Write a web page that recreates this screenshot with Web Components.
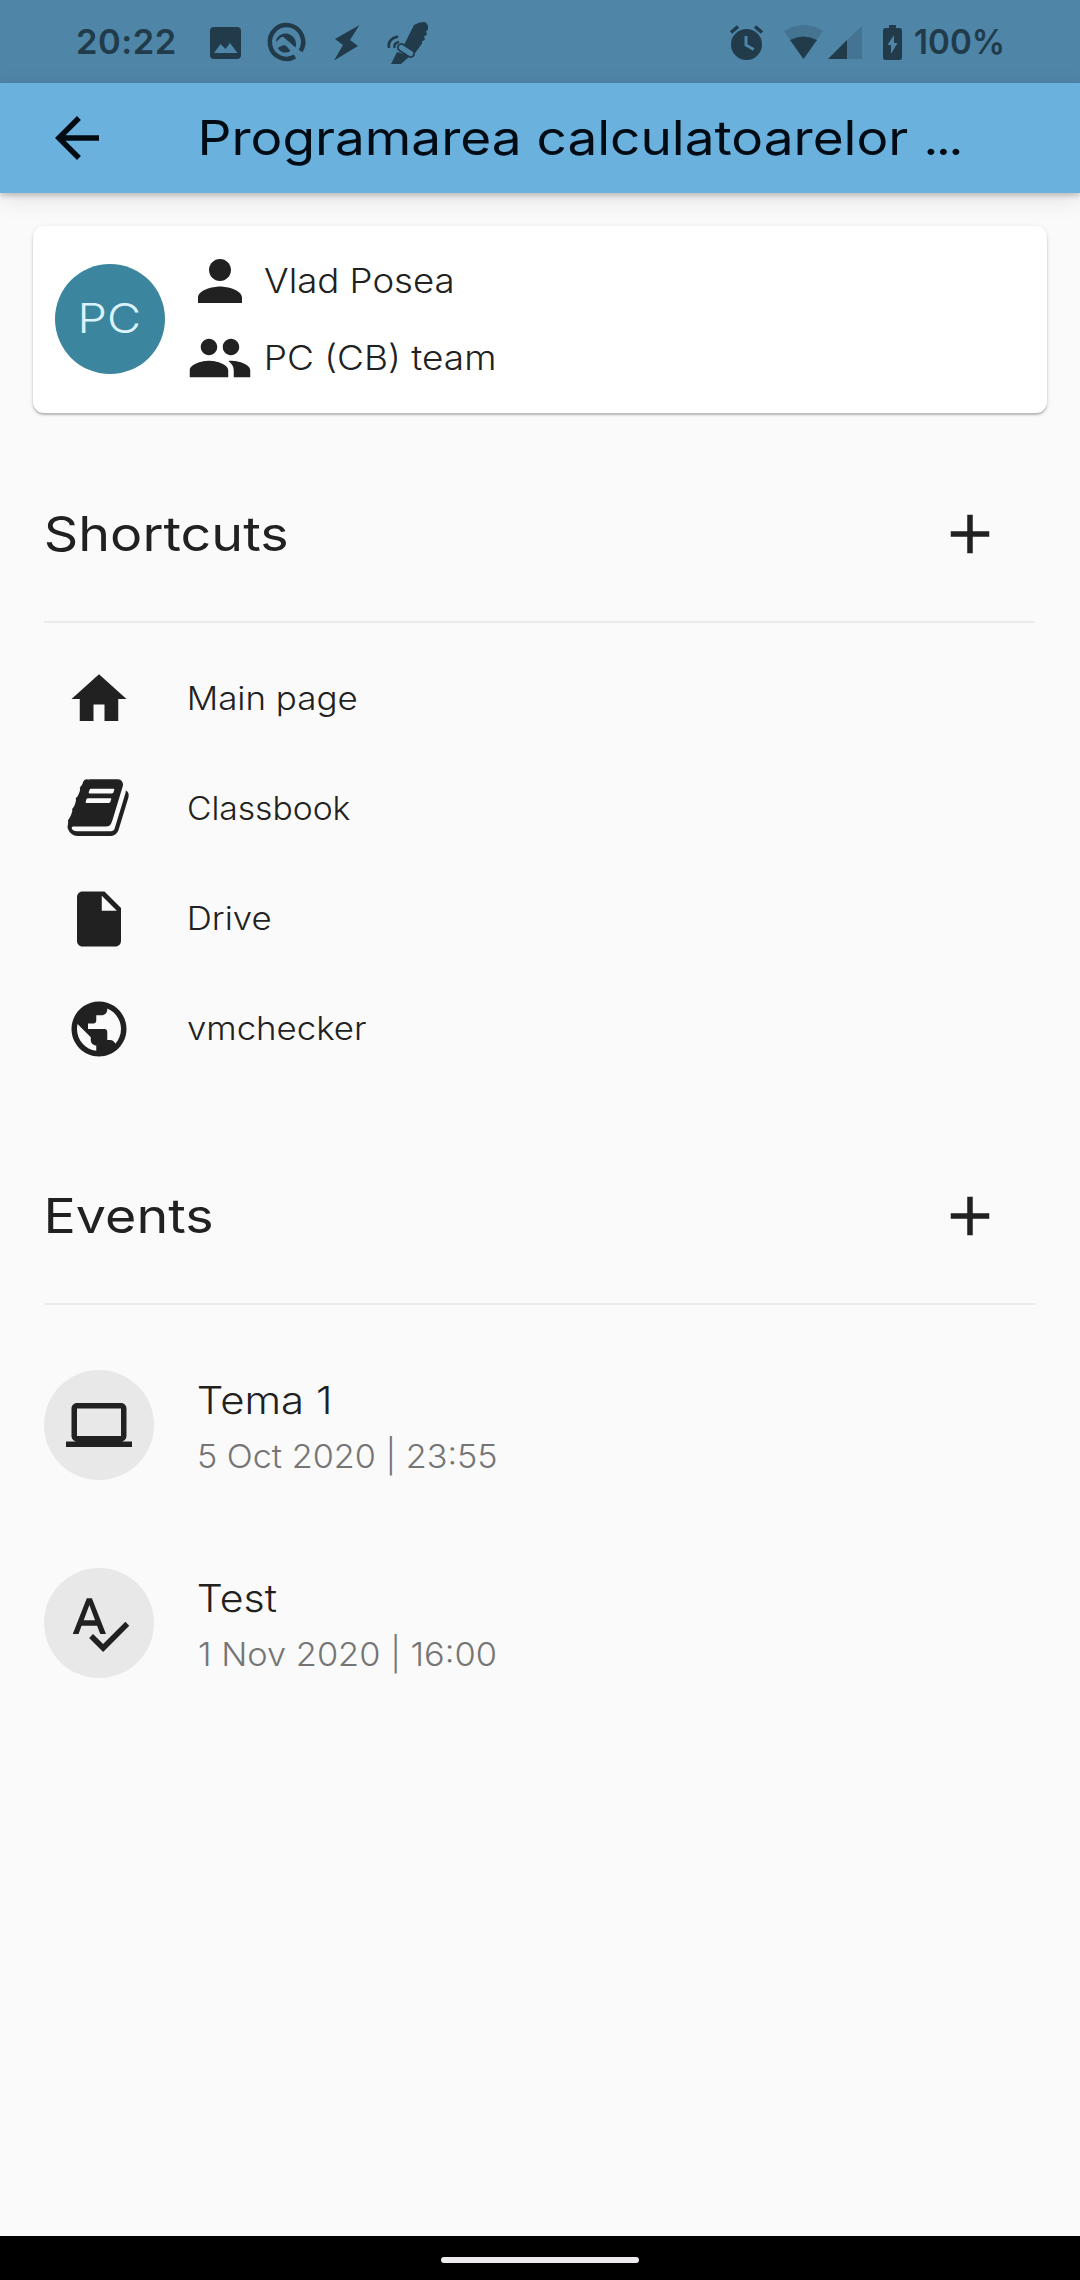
<!DOCTYPE html>
<html lang="en">
<head>
<meta charset="utf-8">
<title>Class details</title>
<style>
html,body{margin:0;padding:0;background:#fafafa}
body{font-family:Inter,"Open Sans",sans-serif;color:#212121;width:1080px;height:2280px;overflow:hidden}
</style>
</head>
<body>
<class-page></class-page>
<script>
const define = (name, html, setup) => customElements.define(name, class extends HTMLElement {
  connectedCallback() {
    if (this.shadowRoot) return;
    const root = this.attachShadow({ mode: "open" });
    root.innerHTML = html;
    if (setup) setup(this, root);
  }
});

/* Single line label whose ink spans exactly the width given by w. */
define("fit-label", `<style>
:host{display:block;white-space:nowrap;line-height:1.2;flex:none}
span{display:inline-block;transform-origin:0 50%}
</style><span><slot></slot></span>`, (el, root) => {
  const size = +el.getAttribute("size"), weight = el.getAttribute("weight") || "300", w = +el.getAttribute("w");
  const spacing = +(el.getAttribute("spacing") || 0);
  el.style.cssText += `;width:${w}px;font-size:${size}px;font-weight:${weight};letter-spacing:${spacing}px`;
  const ctx = document.createElement("canvas").getContext("2d");
  ctx.font = `${weight} ${size}px Inter, "Open Sans", sans-serif`;
  ctx.letterSpacing = spacing + "px";
  const m = ctx.measureText(el.textContent);
  const k = w / (m.actualBoundingBoxLeft + m.actualBoundingBoxRight);
  root.querySelector("span").style.transform = `translateX(${m.actualBoundingBoxLeft * k}px) scaleX(${k})`;
});

const icons = {
  back: "M20 11H7.83l5.59-5.59L12 4l-8 8 8 8 1.41-1.41L7.83 13H20v-2z",
  plus: "M19 13h-6v6h-2v-6H5v-2h6V5h2v6h6v2z",
  person: "M12 12c2.21 0 4-1.79 4-4s-1.79-4-4-4-4 1.79-4 4 1.79 4 4 4zm0 2c-2.67 0-8 1.34-8 4v2h16v-2c0-2.66-5.33-4-8-4z",
  people: "M16 11c1.66 0 2.99-1.34 2.99-3S17.66 5 16 5c-1.66 0-3 1.34-3 3s1.34 3 3 3zm-8 0c1.66 0 2.99-1.34 2.99-3S9.66 5 8 5C6.34 5 5 6.34 5 8s1.34 3 3 3zm0 2c-2.33 0-7 1.17-7 3.5V19h14v-2.5c0-2.33-4.67-3.5-7-3.5zm8 0c-.29 0-.62.02-.97.05 1.16.84 1.97 1.97 1.97 3.45V19h6v-2.5c0-2.33-4.67-3.5-7-3.5z",
  home: "M10 20v-6h4v6h5v-8h3L12 3 2 12h3v8z",
  file: "M6 2c-1.1 0-1.99.9-1.99 2L4 20c0 1.1.89 2 1.99 2H18c1.1 0 2-.9 2-2V8l-6-6H6zm7 7V3.5L18.5 9H13z",
  globe: "M12 2C6.48 2 2 6.48 2 12s4.48 10 10 10 10-4.48 10-10S17.52 2 12 2zm-1 17.93c-3.95-.49-7-3.85-7-7.93 0-.62.08-1.21.21-1.79L9 15v1c0 1.1.9 2 2 2v1.93zm6.9-2.54c-.26-.81-1-1.39-1.9-1.39h-1v-3c0-.55-.45-1-1-1H8v-2h2c.55 0 1-.45 1-1V7h2c1.1 0 2-.9 2-2v-.41c2.93 1.19 5 4.06 5 7.41 0 2.08-.8 3.97-2.1 5.39z",
  laptop: "M20 18c1.1 0 1.99-.9 1.99-2L22 6c0-1.1-.9-2-2-2H4c-1.1 0-2 .9-2 2v10c0 1.1.9 2 2 2H0v2h24v-2h-4zM4 6h16v10H4V6z",
  spell: "M12.45 16h2.09L9.43 3H7.57L2.46 16h2.09l1.12-3h5.64l1.14 3zm-6.02-5L8.5 5.48 10.57 11H6.43zm15.16.59l-8.09 8.09L9.83 16l-1.41 1.41 5.09 5.09L23 13l-1.41-1.41z",
  book: "M1639 478q40 57 18 129l-275 906q-19 64-76.5 107.5t-122.5 43.5h-923q-77 0-148.5-53.5t-99.5-131.5q-24-67-2-127 0-4 3-27t4-37q1-8-3-21.5t-3-19.5q2-11 8-21t16.5-23.5 16.5-23.5q23-38 45-91.5t30-91.5q3-10 .5-30t-.5-28q3-11 17-28t17-23q21-36 42-92t25-90q1-9-2.500-32t.5-28q4-13 22-30.5t22-22.5q19-26 42.500-84.500t27.500-96.500q1-8-3-25.500t-2-26.500q2-8 9-18t18-23 17-21q8-12 16.500-30.500t15-35 16-36 19.500-32 26.500-23.500 36-11.500 47.500 5.500l-1 3q38-9 51-9h761q74 0 114 56t18 130l-274 906q-36 119-71.500 153.500t-128.500 34.500h-869q-27 0-38 15-11 16-1 43 24 70 144 70h923q29 0 56-15.500t35-41.500l300-987q7-22 5-57 38 15 59 43zm-1064 2q-4 13 2 22.500t20 9.500h608q13 0 25.500-9.500t16.500-22.500l21-64q4-13-2-22.500t-20-9.500h-608q-13 0-25.500 9.500t-16.500 22.500zm-83 256q-4 13 2 22.500t20 9.500h608q13 0 25.500-9.500t16.500-22.500l21-64q4-13-2-22.500t-20-9.500h-608q-13 0-25.500 9.500t-16.500 22.500z"
};
define("app-icon", "", (el, root) => {
  const n = el.getAttribute("name");
  root.innerHTML = `<style>:host{display:block;width:66px;height:66px;flex:none}svg{display:block;width:100%;height:100%;fill:currentColor}</style>
<svg viewBox="${n === "book" ? "-42 38 1792 1792" : "0 0 24 24"}"><path d="${icons[n]}"/></svg>`;
});

define("status-bar", `<style>
:host{display:flex;justify-content:space-between;align-items:center;box-sizing:border-box;height:83px;padding:2px 78px 0 78px;background:#4f85a7;color:#213b4b}
div{display:flex;align-items:center}
svg{display:block;fill:currentColor;overflow:visible;flex:none}
</style>
<div>
 <fit-label size="34" w="97" weight="600" spacing="0.5">20:22</fit-label>
 <svg style="margin-left:35px" width="31" height="32" viewBox="0 0 31 32"><path fill-rule="evenodd" d="M4 0h23q4 0 4 4v24q0 4-4 4H4q-4 0-4-4V4q0-4 4-4zM4 26h23.500l-7.500-10-4.500 6-5-5z"/></svg>
 <svg style="margin-left:26px" width="38" height="39" viewBox="0 0 38 39"><path d="M28 33.500A16.700 16.900 0 1 1 33.600 28" fill="none" stroke="currentColor" stroke-width="4.500"/><path d="M10 15a10.500 10.500 0 0 1 18.500 9.500L17 14.500q-1.500-1.500-3-.2L9 19q0-2 1-4zM10.500 25l5-2.500q2-1 4 .7l4 4.800q-3 2-7 1.500-4-1-6-4.500z"/></svg>
 <svg style="margin-left:29px" width="26" height="36" viewBox="0 0 26 36"><path d="M25.500 0 1 14l8 6L0 35.500 24 21l-8-6z"/></svg>
 <svg style="margin-left:27px" width="42" height="42" viewBox="0 0 42 42"><path d="M15 27 27 3q7-4 12-2.500l2 3v4l-2 2 1 3-3 2 1 3-3 2v2l-9 12.500q-3-3-11-7zM10 30l13 4-9 8H4z"/><rect x="10" y="25" width="18" height="7" rx="3.500" transform="rotate(33 19 28.500)" fill="#4f85a7" stroke="currentColor" stroke-width="1.800"/><path d="M2 26q-2-9 9-11.500M7.500 26q-1-5 4.500-6" fill="none" stroke="currentColor" stroke-width="2.500"/></svg>
</div>
<div>
 <svg width="33" height="35" viewBox="0 0 33 35"><path fill-rule="evenodd" d="M16.500 4a15.500 15.500 0 1 0 0 31 15.500 15.500 0 0 0 0-31zM14.500 11h3v8.200l7 4.100-1.500 2.500-8.500-5z"/><path d="M1 7.500 8 1.500M32 7.500l-7-6" stroke="currentColor" stroke-width="3.500"/></svg>
 <svg style="margin-left:21px" width="39" height="34" viewBox="0 0 39 34"><path opacity=".22" d="M0 6q19.500-12 39 0L19.500 34z"/><path d="M6 15q13.500-7 27 0L19.500 34z"/></svg>
 <svg style="margin-left:5px" width="34" height="33" viewBox="0 0 34 33"><path opacity=".22" d="M34 0v33H19V14z"/><path d="M19 14v19H0z"/></svg>
 <svg style="margin-left:21px" width="19" height="35" viewBox="0 0 19 35"><path fill-rule="evenodd" d="M6 0h7v3h3.500Q19 3 19 5.500v27q0 2.500-2.500 2.500h-14Q0 35 0 32.500v-27Q0 3 2.500 3H6zM11 10 4.500 20H8v9l6.500-11H11z"/></svg>
 <fit-label style="margin-left:13px" size="34" w="87" weight="600">100%</fit-label>
</div>`);

define("app-bar", `<style>
:host{display:flex;align-items:center;box-sizing:border-box;height:109.500px;padding:0 44px;background:#6ab1dd;color:#000b14;box-shadow:0 3px 5px rgba(0,0,0,.18),0 6px 22px rgba(0,0,0,.1);position:relative;z-index:1}
</style><app-icon name="back"></app-icon><slot></slot>`);

define("info-card", `<style>
:host{display:flex;align-items:center;box-sizing:border-box;height:187.500px;margin:33px 33px;padding:0 22px;background:#fff;border-radius:11px;box-shadow:0 2px 2px rgba(0,0,0,.22),0 1px 5px rgba(0,0,0,.1)}
.avatar{width:110px;height:110px;border-radius:50%;background:#3b859e;color:#dcf2fc;display:flex;align-items:center;justify-content:center;flex:none}
.avatar fit-label{margin-top:-2px}
.rows{display:flex;flex-direction:column;gap:11px;margin-left:22px}
.rows div{display:flex;align-items:center;height:66px}
.rows fit-label{margin-top:1px}
</style>
<div class="avatar"><fit-label size="41" w="58">PC</fit-label></div>
<div class="rows">
<div><app-icon name="person"></app-icon><fit-label style="margin-left:11px" size="33.500" w="188">Vlad Posea</fit-label></div>
<div><app-icon name="people"></app-icon><fit-label style="margin-left:14px" size="33.500" w="227">PC (CB) team</fit-label></div>
</div>`);

define("section-header", `<style>
:host{display:flex;align-items:center;justify-content:space-between;box-sizing:border-box;height:177px;margin:0 45px 0 44px;padding:0 32px 0 1.500px;border-bottom:2px solid #ebebeb}
</style><slot></slot><app-icon name="plus"></app-icon>`);

define("shortcut-item", `<style>
:host{display:flex;align-items:center;height:110px;padding-left:66px}
app-icon{margin-top:-3px}
div{margin:-1px 0 0 var(--indent,58px)}
</style><div><slot></slot></div>`, (el, root) => {
  const icon = document.createElement("app-icon");
  icon.setAttribute("name", el.getAttribute("icon"));
  root.querySelector("div").before(icon);
});

define("event-item", `<style>
:host{display:flex;align-items:center;height:198px;padding-left:44px}
.disc{width:110px;height:110px;border-radius:50%;background:#e8e8e8;display:flex;align-items:center;justify-content:center;flex:none}
.text{display:flex;flex-direction:column;margin-left:45px;gap:14px;padding-top:4px}
::slotted([slot=date]){color:#757575}
</style><div class="disc"></div><div class="text"><slot></slot><slot name="date"></slot></div>`, (el, root) => {
  const i = document.createElement("app-icon");
  i.setAttribute("name", el.getAttribute("icon"));
  root.querySelector(".disc").append(i);
});

define("nav-bar", `<style>
:host{display:flex;align-items:center;justify-content:center;height:44px;background:#000;padding-top:4px;box-sizing:border-box}
i{width:198px;height:6px;border-radius:3px;background:#eeebee}
</style><i></i>`);

define("class-page", `<style>
:host{display:flex;flex-direction:column;width:1080px;height:2280px;background:#fafafa}
main{flex:1}
.shortcuts{padding:22px 0 43px}
.events{padding-top:21px}
.dots{letter-spacing:-2.500px}
</style>
<status-bar></status-bar>
<app-bar><fit-label style="margin-left:92px" size="48" w="764" weight="400">Programarea calculatoarelor <span class="dots">...</span></fit-label></app-bar>
<main>
<info-card></info-card>
<section-header><fit-label size="48" w="240" weight="400">Shortcuts</fit-label></section-header>
<div class="shortcuts">
<shortcut-item icon="home"><fit-label size="32" w="166">Main page</fit-label></shortcut-item>
<shortcut-item icon="book" style="--indent:56.500px"><fit-label size="32" w="161.500">Classbook</fit-label></shortcut-item>
<shortcut-item icon="file"><fit-label size="32" w="80">Drive</fit-label></shortcut-item>
<shortcut-item icon="globe" style="--indent:55.500px"><fit-label size="32" w="178">vmchecker</fit-label></shortcut-item>
</div>
<section-header><fit-label style="margin-left:2px" size="48" w="163" weight="400">Events</fit-label></section-header>
<div class="events">
<event-item icon="laptop"><fit-label size="38.500" w="130">Tema 1</fit-label><fit-label slot="date" size="33" w="297">5 Oct 2020 | 23:55</fit-label></event-item>
<event-item icon="spell"><fit-label size="38.500" w="77.500">Test</fit-label><fit-label slot="date" size="33" w="296.500">1 Nov 2020 | 16:00</fit-label></event-item>
</div>
</main>
<nav-bar></nav-bar>`);
</script>
</body>
</html>
